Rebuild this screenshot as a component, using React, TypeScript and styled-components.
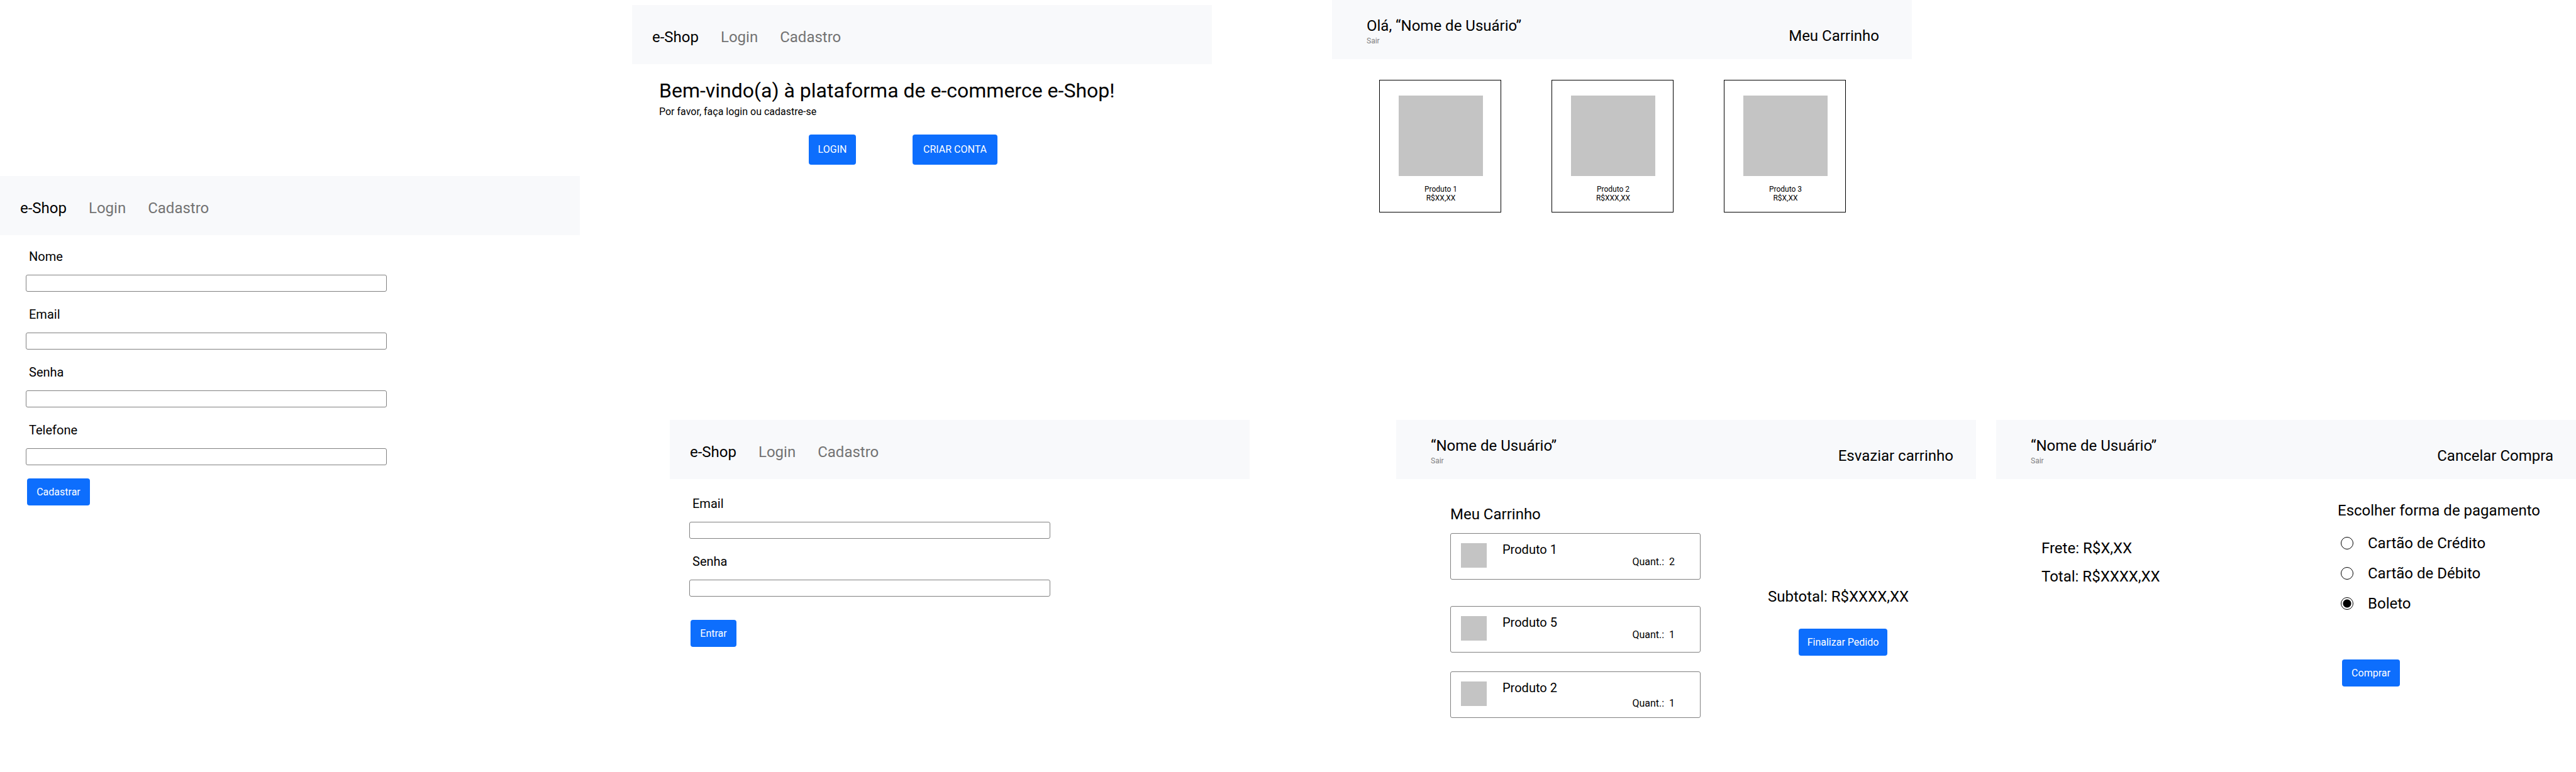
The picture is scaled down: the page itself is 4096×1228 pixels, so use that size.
import React from "react";
import styled, { createGlobalStyle } from "styled-components";

const GlobalStyle = createGlobalStyle`
  * { box-sizing: border-box; }
  body {
    margin: 0;
    background: #ffffff;
    color: #000000;
    font-family: Roboto, "Liberation Sans", sans-serif;
    font-size: 24px;
    line-height: 28px;
  }
  h1, h2, p, ul, fieldset, legend, form { margin: 0; padding: 0; border: 0; font-weight: 400; }
  ul { list-style: none; }
  a { color: inherit; text-decoration: none; }
`;

const Board = styled.main`
  display: grid;
  grid-template-columns: 922fr 83fr 982fr 131fr 1978fr;
  align-items: start;
`;

const Column = styled.div<{ $start: number }>`
  grid-column-start: ${(p) => p.$start};
  grid-row: 1;
  display: grid;
  grid-template-rows: 668px auto;
`;

const SignUpColumn = styled.div`
  grid-column-start: 1;
  grid-row: 1;
  padding-top: 280px;
`;

const Shelf = styled.div<{ $before?: number; $after?: number }>`
  display: grid;
  grid-template-columns: 1fr 1fr;
  column-gap: 32px;
  align-items: start;
  padding-left: ${(p) => p.$before ?? 0}px;
  padding-right: ${(p) => p.$after ?? 0}px;
`;

const Slot = styled.div<{ $top?: number; $before?: number; $after?: number }>`
  padding: ${(p) => `${p.$top ?? 0}px ${p.$after ?? 0}px 0 ${p.$before ?? 0}px`};
`;

const Screen = styled.section`
  display: flex;
  flex-direction: column;
`;

const NavBar = styled.nav`
  display: flex;
  gap: 35px;
  height: 94px;
  padding: 37px 32px 0;
  background: #f8f9fb;
`;

const NavLink = styled.a<{ $brand?: boolean }>`
  color: ${(p) => (p.$brand ? "#000000" : "#737373")};
`;

const UserBar = styled.header<{ $end: number }>`
  display: flex;
  justify-content: space-between;
  height: 94px;
  padding: 27px ${(p) => p.$end}px 0 55px;
  background: #f8f9fb;
`;

const SignOut = styled.a`
  display: block;
  color: #808080;
  font-size: 12px;
  line-height: 20px;
`;

const BarAction = styled.a`
  padding-top: 16px;
`;

const Button = styled.button<{ $width: number; $tall?: boolean }>`
  width: ${(p) => p.$width}px;
  height: ${(p) => (p.$tall ? 48 : 43)}px;
  padding: 0;
  border: 0;
  border-radius: 4px;
  background: #0d6efd;
  color: #ffffff;
  font: 400 16px/20px Roboto, "Liberation Sans", sans-serif;
  white-space: nowrap;
`;

const Welcome = styled.div`
  padding: 23px 43px 0;
`;

const Title = styled.h1`
  font-size: 32px;
  line-height: 38px;
`;

const Hint = styled.p`
  font-size: 16px;
  line-height: 20px;
  padding-top: 5px;
`;

const WelcomeActions = styled.div`
  display: flex;
  gap: 90px;
  padding: 26px 0 0 238px;
`;

const Form = styled.form<{ $top: number; $inset: number }>`
  padding: ${(p) => p.$top}px 0 0 ${(p) => p.$inset}px;
`;

const Fields = styled.div`
  display: flex;
  flex-direction: column;
  gap: 24px;
`;

const Field = styled.div`
  display: flex;
  flex-direction: column;
  width: 574px;
`;

const FieldLabel = styled.label`
  padding-left: 5px;
  font-size: 20px;
  line-height: 24px;
  padding-bottom: 17px;
`;

const TextBox = styled.input`
  width: 100%;
  height: 27px;
  border: 1px solid #808080;
  border-radius: 3px;
  background: #ffffff;
  padding: 0 8px;
  font: 400 16px/20px Roboto, "Liberation Sans", sans-serif;
`;

const FormActions = styled.div<{ $gap: number }>`
  padding: ${(p) => p.$gap}px 0 0 2px;
`;

const ProductList = styled.ul`
  display: flex;
  gap: 80px;
  padding: 33px 0 0 75px;
`;

const ProductCard = styled.li`
  width: 194px;
  height: 211px;
  padding: 24px 28px 0 30px;
  border: 1px solid #000000;
  text-align: center;
  font-size: 12px;
  line-height: 14px;
`;

const ProductImage = styled.div`
  height: 128px;
  margin-bottom: 14px;
  background: #c4c4c4;
`;

const CartBody = styled.div`
  display: flex;
  gap: 107px;
  padding: 42px 0 0 86px;
`;

const CartTitle = styled.h2`
  font-size: 24px;
  line-height: 28px;
`;

const CartList = styled.ul`
  width: 398px;
  padding-top: 16px;
`;

const CartItem = styled.li<{ $after: number }>`
  display: flex;
  height: 74px;
  margin-bottom: ${(p) => p.$after}px;
  padding: 15px 40px 0 16px;
  border: 1px solid #808080;
  border-radius: 3px;
`;

const Thumb = styled.div`
  width: 41px;
  height: 39px;
  margin-right: 25px;
  background: #c4c4c4;
`;

const ItemText = styled.div<{ $gap: number }>`
  flex: 1;
  display: flex;
  flex-direction: column;
  row-gap: ${(p) => p.$gap}px;
  font-size: 20px;
  line-height: 20px;
`;

const Quantity = styled.span`
  align-self: flex-end;
  font-size: 16px;
  line-height: 20px;
  white-space: pre;
`;

const Summary = styled.div`
  padding-top: 131px;
`;

const SummaryAction = styled.div`
  padding: 37px 0 0 49px;
`;

const CheckoutBody = styled.div`
  display: flex;
  padding: 36px 0 0 72px;
`;

const Totals = styled.div`
  width: 471px;
  display: flex;
  flex-direction: column;
  gap: 17px;
  padding-top: 60px;
`;

const Options = styled.fieldset`
  display: flex;
  flex-direction: column;
  gap: 20px;
  padding: 0 0 75px 5px;
`;

const Legend = styled.legend`
  margin-left: -5px;
  padding-bottom: 24px;
`;

const Option = styled.label`
  display: flex;
  align-items: center;
  gap: 23px;
`;

const Radio = styled.input`
  appearance: none;
  width: 20px;
  height: 20px;
  margin: 0;
  border: 1px solid #000000;
  border-radius: 50%;
  &:checked {
    background: radial-gradient(circle, #000000 6px, #ffffff 7px);
  }
`;

const PayAction = styled.div`
  padding-left: 7px;
`;

function ShopNav() {
  return (
    <NavBar>
      <NavLink href="#home" $brand>e-Shop</NavLink>
      <NavLink href="#login">Login</NavLink>
      <NavLink href="#cadastro">Cadastro</NavLink>
    </NavBar>
  );
}

function AccountBar({ name, action, end }: { name: string; action: string; end: number }) {
  return (
    <UserBar $end={end}>
      <div>
        {name}
        <SignOut href="#sair">Sair</SignOut>
      </div>
      <BarAction href="#acao">{action}</BarAction>
    </UserBar>
  );
}

type FormProps = {
  id: string;
  fields: string[];
  submit: string;
  submitWidth: number;
  top: number;
  inset: number;
  gap: number;
};

function AccountForm({ id, fields, submit, submitWidth, top, inset, gap }: FormProps) {
  return (
    <Screen>
      <ShopNav />
      <Form $top={top} $inset={inset}>
        <Fields>
          {fields.map((label) => (
            <Field key={label}>
              <FieldLabel htmlFor={`${id}-${label}`}>{label}</FieldLabel>
              <TextBox id={`${id}-${label}`} type={label === "Senha" ? "password" : "text"} />
            </Field>
          ))}
        </Fields>
        <FormActions $gap={gap}>
          <Button type="button" $width={submitWidth}>{submit}</Button>
        </FormActions>
      </Form>
    </Screen>
  );
}

const products = [
  { name: "Produto 1", price: "R$XX,XX" },
  { name: "Produto 2", price: "R$XXX,XX" },
  { name: "Produto 3", price: "R$X,XX" },
];

const cart = [
  { name: "Produto 1", count: 2, after: 42, gap: 0 },
  { name: "Produto 5", count: 1, after: 30, gap: 0 },
  { name: "Produto 2", count: 1, after: 0, gap: 5 },
];

const payments = ["Cartão de Crédito", "Cartão de Débito", "Boleto"];

export default function App() {
  return (
    <>
      <GlobalStyle />
      <Board>
        <SignUpColumn>
          <AccountForm
            id="cadastro"
            fields={["Nome", "Email", "Senha", "Telefone"]}
            submit="Cadastrar"
            submitWidth={100}
            top={22}
            inset={41}
            gap={21}
          />
        </SignUpColumn>

        <Column $start={3}>
          <Slot $top={8} $after={60}>
            <Screen>
              <ShopNav />
              <Welcome>
                <Title>Bem-vindo(a) à plataforma de e-commerce e-Shop!</Title>
                <Hint>Por favor, faça login ou cadastre-se</Hint>
                <WelcomeActions>
                  <Button type="button" $width={75} $tall>LOGIN</Button>
                  <Button type="button" $width={135} $tall>CRIAR CONTA</Button>
                </WelcomeActions>
              </Welcome>
            </Screen>
          </Slot>
          <Slot $before={60}>
            <AccountForm
              id="login"
              fields={["Email", "Senha"]}
              submit="Entrar"
              submitWidth={73}
              top={27}
              inset={31}
              gap={37}
            />
          </Slot>
        </Column>

        <Column $start={5}>
          <Shelf $after={102}>
            <Screen>
              <AccountBar name="Olá, “Nome de Usuário”" action="Meu Carrinho" end={52} />
              <ProductList>
                {products.map((p) => (
                  <ProductCard key={p.name}>
                    <ProductImage />
                    <p>{p.name}</p>
                    <p>{p.price}</p>
                  </ProductCard>
                ))}
              </ProductList>
            </Screen>
          </Shelf>
          <Shelf $before={102}>
            <Screen>
              <AccountBar name="“Nome de Usuário”" action="Esvaziar carrinho" end={36} />
              <CartBody>
                <div>
                  <CartTitle>Meu Carrinho</CartTitle>
                  <CartList>
                    {cart.map((item) => (
                      <CartItem key={item.name} $after={item.after}>
                        <Thumb />
                        <ItemText $gap={item.gap}>
                          {item.name}
                          <Quantity>{`Quant.:  ${item.count}`}</Quantity>
                        </ItemText>
                      </CartItem>
                    ))}
                  </CartList>
                </div>
                <Summary>
                  <p>Subtotal: R$XXXX,XX</p>
                  <SummaryAction>
                    <Button type="button" $width={141}>Finalizar Pedido</Button>
                  </SummaryAction>
                </Summary>
              </CartBody>
            </Screen>
            <Screen>
              <AccountBar name="“Nome de Usuário”" action="Cancelar Compra" end={36} />
              <CheckoutBody>
                <Totals>
                  <p>Frete: R$X,XX</p>
                  <p>Total: R$XXXX,XX</p>
                </Totals>
                <form>
                  <Options>
                    <Legend>Escolher forma de pagamento</Legend>
                    {payments.map((label) => (
                      <Option key={label}>
                        <Radio type="radio" name="pagamento" defaultChecked={label === "Boleto"} />
                        {label}
                      </Option>
                    ))}
                  </Options>
                  <PayAction>
                    <Button type="button" $width={92}>Comprar</Button>
                  </PayAction>
                </form>
              </CheckoutBody>
            </Screen>
          </Shelf>
        </Column>
      </Board>
    </>
  );
}
